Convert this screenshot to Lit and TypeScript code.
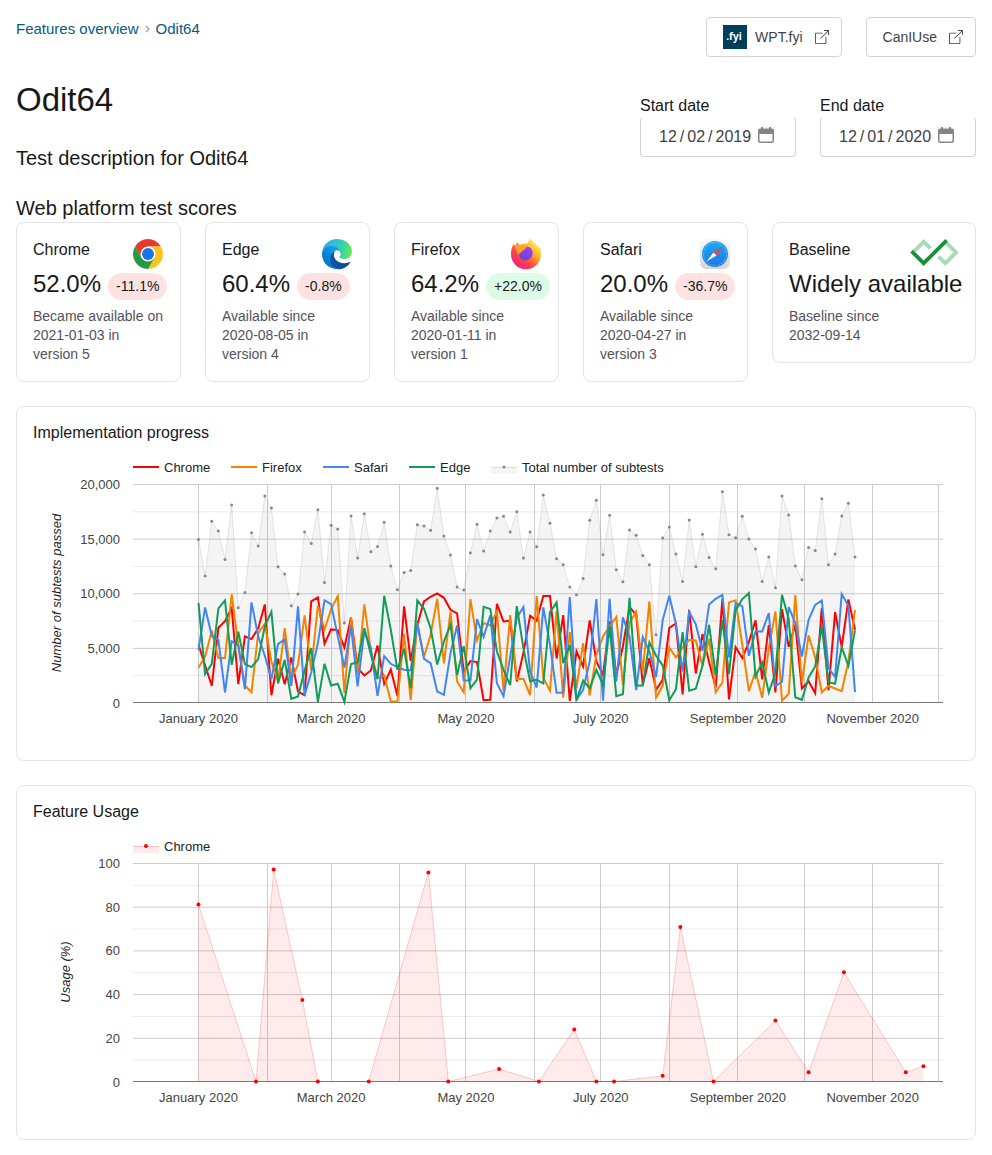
import { LitElement, html, svg, css } from "lit";
import { customElement, property } from "lit/decorators.js";

// Samples taken every three days, measured downwards from SAMPLE_TOP (full scale) to SAMPLE_ZERO.
const SAMPLE_TOP = 28;
const SAMPLE_ZERO = 683;

const TOTAL = [194,304,140,169,254,91,399,353,174,214,64,100,276,298,393,358,172,206,105,323,152,163,445,124,250,117,231,215,143,274,345,293,287,150,154,167,41,184,241,337,346,234,149,229,169,130,125,172,111,250,172,216,61,146,252,270,337,360,311,137,77,240,122,285,321,166,182,242,270,480,190,157,238,320,136,276,179,248,282,51,180,189,125,193,223,320,247,339,64,121,274,315,218,227,72,270,238,124,86,247];
const CHROME = [510,572,633,459,439,400,628,485,493,461,389,661,552,628,548,650,661,380,368,507,464,466,518,428,580,602,587,512,627,584,663,395,558,450,380,366,356,369,405,416,590,559,562,676,675,387,440,438,620,535,423,438,364,364,551,421,678,530,575,437,560,600,440,600,515,397,420,630,550,645,615,459,446,659,406,596,478,562,638,372,674,517,550,502,437,614,451,653,403,516,450,641,619,655,400,646,412,517,374,465];
const FIREFOX = [579,545,468,550,550,359,510,632,652,475,447,560,620,460,612,570,422,585,392,465,403,364,655,428,600,389,530,610,602,680,680,478,676,445,546,480,372,566,411,620,652,373,497,445,452,410,648,421,613,612,661,364,609,648,408,668,472,640,505,662,540,485,455,427,630,445,411,590,380,668,633,518,548,518,495,497,573,492,652,623,383,377,510,649,590,669,520,410,678,657,361,623,482,548,653,633,641,649,560,405];
const SAFARI = [525,398,484,495,653,499,512,643,383,485,543,613,507,494,633,395,661,593,505,377,388,485,578,452,635,470,520,663,544,567,577,585,587,447,552,565,650,660,535,452,617,617,433,486,422,625,664,545,430,397,590,638,398,510,654,653,367,675,645,560,373,678,372,620,428,485,646,487,530,607,436,363,447,590,411,449,528,389,372,360,548,385,394,543,470,470,415,634,621,397,445,545,435,390,377,580,607,358,393,652];
const EDGE = [384,598,567,401,377,570,471,568,577,553,455,411,626,555,672,665,587,520,681,567,632,627,681,568,562,460,540,613,363,465,585,522,640,377,402,460,569,500,450,601,514,640,614,396,403,530,585,631,394,520,619,615,626,412,383,565,510,677,617,640,585,630,455,664,658,369,632,632,503,543,572,676,643,472,648,642,572,450,601,436,598,407,373,355,605,563,653,595,360,433,667,675,608,575,455,622,627,517,573,467];

// [day of 2020, usage in percent]
const USAGE: [number, number][] = [
  [0, 81], [26, 0], [34, 97], [47, 37.3], [54, 0], [77, 0], [104, 95.7], [113, 0], [136, 5.7], [154, 0], [170, 23.8],
  [180, 0], [188, 0], [210, 2.6], [218, 70.7], [233, 0], [261, 27.9], [276, 4.2], [292, 50], [320, 4.2], [328, 7],
];

interface Series { name: string; color: string; points: [number, number][]; area?: boolean; dot?: number; fill?: number; stroke?: number; }

const daily = (samples: number[]): [number, number][] =>
  samples.map((v, i) => [i * 3, (SAMPLE_ZERO - v) / (SAMPLE_ZERO - SAMPLE_TOP)]);

const PROGRESS: Series[] = [
  { name: "Chrome", color: "#ff0000", points: daily(CHROME) },
  { name: "Firefox", color: "#f48400", points: daily(FIREFOX) },
  { name: "Safari", color: "#4285f4", points: daily(SAFARI) },
  { name: "Edge", color: "#0f9d58", points: daily(EDGE) },
  { name: "Total number of subtests", color: "#888888", points: daily(TOTAL), area: true, dot: 1.5, fill: 0.09, stroke: 0.2 },
];
const USAGE_SERIES: Series[] = [
  { name: "Chrome", color: "#ff0000", points: USAGE.map(([d, v]) => [d, v / 100] as [number, number]), area: true, dot: 2, fill: 0.08, stroke: 0.2 },
];

const MONTHS = [
  { day: 0, label: "January 2020" }, { day: 31, label: "" }, { day: 60, label: "March 2020" }, { day: 91, label: "" },
  { day: 121, label: "May 2020" }, { day: 152, label: "" }, { day: 182, label: "July 2020" }, { day: 213, label: "" },
  { day: 244, label: "September 2020" }, { day: 274, label: "" }, { day: 305, label: "November 2020" }, { day: 335, label: "" },
];

const LEFT = 100, RIGHT = 910, TOP = 30, BOTTOM = 248.5;
const px = (day: number) => 165.5 + day * 2.2104;
const py = (f: number) => BOTTOM - f * (BOTTOM - TOP);

@customElement("time-chart")
class TimeChart extends LitElement {
  @property({ attribute: false }) series: Series[] = [];
  @property({ attribute: false }) ticks: string[] = [];
  @property({ attribute: false }) legendX: number[] = [];
  @property({ attribute: "axis-title" }) axisTitle = "";
  @property({ type: Number, attribute: "title-x" }) titleX = 0;

  static styles = css`
    :host { display: block; }
    svg { display: block; width: 100%; height: auto; font: 13px "Liberation Sans", Arial, sans-serif; }
    .tick { fill: #444; }
    .legend { fill: #222; }
    .axis { fill: #222; font-style: italic; text-anchor: middle; }
    .end { text-anchor: end; }
    .mid { text-anchor: middle; }
  `;

  private drawSeries(s: Series) {
    const line = s.points.map(([d, f]) => `${px(d).toFixed(1)},${py(f).toFixed(1)}`);
    if (!s.area) return svg`<polyline points=${line.join(" ")} fill="none" stroke=${s.color} stroke-width="2"/>`;
    const last = s.points[s.points.length - 1][0];
    const outline = [`${px(0)},${BOTTOM}`, ...line, `${px(last)},${BOTTOM}`].join(" ");
    return svg`
      <polygon points=${outline} fill=${s.color} fill-opacity=${s.fill}/>
      <polyline points=${line.join(" ")} fill="none" stroke=${s.color} stroke-opacity=${s.stroke}/>`;
  }

  render() {
    const steps = this.ticks.length - 1;
    const areas = this.series.filter((s) => s.area);
    const lines = this.series.filter((s) => !s.area);
    return html`
      <svg viewBox="0 0 926 290" role="img" aria-label=${this.axisTitle}>
        ${this.series.map((s, i) => {
          const x = this.legendX[i];
          return svg`
            ${s.area
              ? svg`<rect x=${x} y="13" width="26" height="7" fill=${s.color} fill-opacity=${s.fill}/>
                  <path d="M${x} 13.5h26" stroke=${s.color} stroke-opacity=${s.stroke}/>
                  <circle cx=${x + 13} cy="13" r=${s.dot} fill=${s.color}/>`
              : svg`<path d="M${x} 13h26" stroke=${s.color} stroke-width="2"/>`}
            <text class="legend" x=${x + 31} y="18">${s.name}</text>`;
        })}
        ${Array.from({ length: steps }, (_, i) => svg`
          <rect x=${LEFT} y=${py((i + 0.5) / steps)} width=${RIGHT - LEFT} height="1" fill="#ebebeb"/>`)}
        ${Array.from({ length: steps }, (_, i) => svg`
          <rect x=${LEFT} y=${py((i + 1) / steps)} width=${RIGHT - LEFT} height="1" fill="#ccc"/>`)}
        ${MONTHS.map((m) => svg`<rect x=${Math.round(px(m.day) - 0.5)} y=${TOP} width="1" height=${BOTTOM - TOP} fill="#ccc"/>`)}
        ${areas.map((s) => this.drawSeries(s))}
        <rect x=${LEFT} y="248" width=${RIGHT - LEFT} height="1" fill="#777"/>
        ${lines.map((s) => this.drawSeries(s))}
        ${areas.map((s) => s.points.map(([d, f]) => svg`<circle cx=${px(d)} cy=${py(f)} r=${s.dot} fill=${s.color}/>`))}
        ${this.ticks.map((t, i) => svg`<text class="tick end" x="87" y=${Math.round(py(i / steps) + 5)}>${t}</text>`)}
        ${MONTHS.map((m) => (m.label ? svg`<text class="tick mid" x=${px(m.day)} y="269">${m.label}</text>` : ""))}
        <text class="axis" transform="translate(${this.titleX} 139) rotate(-90)">${this.axisTitle}</text>
      </svg>`;
  }
}

const external = html`<svg class="ext" viewBox="0 0 16 16" fill="currentColor" aria-hidden="true">
  <path fill-rule="evenodd" d="M8.636 3.5a.5.5 0 0 0-.5-.5H1.5A1.5 1.5 0 0 0 0 4.5v10A1.5 1.5 0 0 0 1.5 16h10a1.5 1.5 0 0 0 1.5-1.5V7.864a.5.5 0 0 0-1 0V14.5a.5.5 0 0 1-.5.5h-10a.5.5 0 0 1-.5-.5v-10a.5.5 0 0 1 .5-.5h6.636a.5.5 0 0 0 .5-.5z"/>
  <path fill-rule="evenodd" d="M16 .5a.5.5 0 0 0-.5-.5h-5a.5.5 0 0 0 0 1h3.793L6.146 9.146a.5.5 0 1 0 .708.708L15 1.707V5.5a.5.5 0 0 0 1 0v-5z"/></svg>`;

const wpt = html`<svg class="wpt" viewBox="0 0 24 24" aria-hidden="true">
  <rect width="24" height="24" fill="#003f5c"/>
  <text x="11" y="15" text-anchor="middle" fill="#fff" font-family="Noto Sans, sans-serif" font-weight="700" font-size="10">.fyi</text></svg>`;

const chromeLogo = html`<svg class="logo" viewBox="0 0 48 48" aria-hidden="true">
  <path d="M24 12h20.780A24 24 0 0 0 3.220 12l10.390 18z" fill="#e33b2e"/>
  <path d="M34.390 30 24 48A24 24 0 0 0 44.780 12H24z" fill="#ffc41a"/>
  <path d="M13.610 30 3.220 12A24 24 0 0 0 24 48l10.390-18z" fill="#269a43"/>
  <circle cx="24" cy="24" r="12" fill="#fff"/><circle cx="24" cy="24" r="9.500" fill="#1a73e8"/></svg>`;

const edgeLogo = html`<svg class="logo" viewBox="0 0 256 256" aria-hidden="true">
  <defs>
    <linearGradient id="ea" x1="63" y1="177" x2="242" y2="177" gradientUnits="userSpaceOnUse"><stop stop-color="#0c59a4"/><stop offset="1" stop-color="#114a8b"/></linearGradient>
    <linearGradient id="eb" x1="157" y1="100" x2="46" y2="222" gradientUnits="userSpaceOnUse"><stop stop-color="#1b9de2"/><stop offset=".3" stop-color="#1595df"/><stop offset=".7" stop-color="#0680d7"/><stop offset="1" stop-color="#0078d4"/></linearGradient>
    <linearGradient id="ec" x1="10" y1="60" x2="250" y2="120" gradientUnits="userSpaceOnUse"><stop stop-color="#35a8e8"/><stop offset=".4" stop-color="#2ec2d8"/><stop offset=".7" stop-color="#40d49a"/><stop offset="1" stop-color="#66eb50"/></linearGradient>
  </defs>
  <path fill="url(#ea)" d="M235.700 195.500a93.700 93.700 0 0 1-10.600 4.700 101.900 101.900 0 0 1-35.900 6.400c-47.300 0-88.500-32.500-88.500-74.300a31.500 31.500 0 0 1 16.400-27.300c-42.800 1.800-53.800 46.400-53.800 72.500 0 74 68.100 81.400 82.800 81.400 7.900 0 19.800-2.300 27-4.600l1.300-.4a128.300 128.300 0 0 0 66.600-52.800 4 4 0 0 0-5.300-5.600z"/>
  <path fill="url(#eb)" d="M105.700 241.400a79.200 79.200 0 0 1-22.700-21.300 80.700 80.700 0 0 1 29.500-120c3.200-1.500 8.500-4.100 15.600-4a32.400 32.400 0 0 1 25.700 13 31.900 31.900 0 0 1 6.300 18.700c0-.2 24.500-79.600-80-79.600-43.900 0-80 41.600-80 78.200a130.200 130.200 0 0 0 12.100 56 128 128 0 0 0 156.400 67 75.500 75.500 0 0 1-62.800-8z"/>
  <path fill="url(#ec)" d="M152.300 148.900c-.9 1-3.400 2.500-3.400 5.600 0 2.600 1.700 5.200 4.800 7.300 14.300 10 41.400 8.600 41.500 8.600a59.600 59.600 0 0 0 30.300-8.300 61.400 61.400 0 0 0 30.400-52.900c.3-22.400-8-37.300-11.300-43.900C223.500 23.900 177.700 0 128 0A128 128 0 0 0 0 126.200c.5-36.500 36.800-66 80-66 3.500 0 23.500.3 42 10a72.600 72.600 0 0 1 30.900 29.300c6.100 10.600 7.200 24.100 7.200 29.500s-2.700 13.300-7.800 19.900z"/></svg>`;

const firefoxLogo = html`<svg class="logo" viewBox="0 0 30 30" aria-hidden="true">
  <defs>
    <linearGradient id="fa" x1="25" y1="3" x2="5" y2="27" gradientUnits="userSpaceOnUse"><stop stop-color="#fff14f"/><stop offset=".35" stop-color="#ffa930"/><stop offset=".65" stop-color="#ff4a3a"/><stop offset="1" stop-color="#f0208a"/></linearGradient>
    <linearGradient id="fb" x1="10" y1="20" x2="20" y2="8" gradientUnits="userSpaceOnUse"><stop stop-color="#5f45d8"/><stop offset="1" stop-color="#a33df0"/></linearGradient>
  </defs>
  <path fill="url(#fa)" d="M19.500-.8c-1 2-2.500 3.300-3.500 5.500-2.500-.6-4.500-.2-6.500 1-1 .1-2.500-.7-2.800-2.400-1.400 1-2 2.300-2.100 3.500-.8-.2-1.600-1-1.700-2C.8 8 0 11.400 0 15a15 15 0 0 0 30 .5c.2-3.300-.7-7-2.500-9.300.3 1.200.3 2.200.2 3C26 4.500 21.500 3.500 19.500-.8z"/>
  <path fill="url(#fb)" d="M14 8.200c4.500-1.500 8 2 7.600 6.400-.3 4-3.200 6.700-7 6.700-3.900 0-6.600-3-6.600-6.300 0-1.900 1-2.600 3.600-3.200 1.800-.4 2.800-1.200 2.400-3.600z"/>
  <path fill="#ffa22e" d="M3.600 7c2.800-1.600 6-1.300 8.200.4 1.400.2 2.700.4 3.600.6-.2 1.400-1.700 2.400-3.600 2.700l-1 2.200c-1.700.5-2.800 1.300-2.800 3.200C6.400 13.800 5.100 10.500 3.600 7z"/></svg>`;

const safariLogo = html`<svg class="logo" viewBox="0 0 30 30" aria-hidden="true">
  <defs>
    <linearGradient id="sa" x1="0" y1="0" x2="0" y2="1"><stop stop-color="#fafafa"/><stop offset="1" stop-color="#d4d4d4"/></linearGradient>
    <linearGradient id="sb" x1="0" y1="0" x2="0" y2="1"><stop stop-color="#1fa9f5"/><stop offset="1" stop-color="#1d76e6"/></linearGradient>
  </defs>
  <rect width="30" height="30" rx="6.500" fill="url(#sa)"/>
  <circle cx="15" cy="15" r="13" fill="url(#sb)"/>
  <circle cx="15" cy="15" r="11.500" fill="none" stroke="#fff" stroke-opacity=".45" stroke-width="1.200" stroke-dasharray=".5 .8"/>
  <path fill="#f0443a" d="M23.500 7.500 13.500 13.500l3 3z"/><path fill="#fff" d="M6.500 22.500l7-9 3 3z"/></svg>`;

const baselineLogo = html`<svg class="baseline" viewBox="0 0 540 300" aria-hidden="true">
  <path fill="#a8dab5" d="M150 0l90 90-30 30-60-60-90 90-30-30zM420 30l120 120-150 150-90-90 30-30 60 60 90-90-90-90z"/>
  <path fill="#1e8e3e" d="M0 150l150 150L420 30 390 0 150 240 30 120z"/></svg>`;

const BROWSERS = [
  { name: "Chrome", logo: chromeLogo, score: "52.0%", delta: "-11.1%", note: "Became available on 2021-01-03 in version 5" },
  { name: "Edge", logo: edgeLogo, score: "60.4%", delta: "-0.8%", note: "Available since 2020-08-05 in version 4" },
  { name: "Firefox", logo: firefoxLogo, score: "64.2%", delta: "+22.0%", note: "Available since 2020-01-11 in version 1" },
  { name: "Safari", logo: safariLogo, score: "20.0%", delta: "-36.7%", note: "Available since 2020-04-27 in version 3" },
];

@customElement("app-root")
class AppRoot extends LitElement {
  static styles = css`
    :host {
      display: block; box-sizing: border-box; padding: 17px 16px 16px; background: #fff; color: #18181b;
      font: 16px/22px "Liberation Sans", Arial, sans-serif;
    }
    *, *::before, *::after { box-sizing: border-box; }
    h1, h2, h3, p { margin: 0; font-weight: 400; }
    .row { display: flex; justify-content: space-between; align-items: flex-start; gap: 24px; }
    .links, .dates { display: flex; gap: 24px; }
    nav { display: flex; align-items: center; gap: 6px; font-size: 15px; line-height: 24px; }
    nav a { color: #075985; text-decoration: none; }
    .sep { width: 5px; height: 8px; fill: none; stroke: #a1a1aa; stroke-width: 1.3; }
    .btn {
      display: flex; align-items: center; height: 40px; padding: 0 11px 0 16px; border: 1px solid #d4d4d8; border-radius: 4px;
      color: #3f3f46; text-decoration: none; font-size: 14px;
    }
    .wpt { width: 24px; height: 24px; margin-right: 8px; }
    .ext { width: 14px; height: 14px; margin: 0 1px 0 12px; }
    .top { margin-top: 23px; }
    h1 { font-size: 33px; line-height: 40px; font-weight: 500; }
    .desc { margin-top: 24px; font-size: 20px; line-height: 28px; }
    .dates { padding-top: 15px; }
    .dates label { display: block; }
    .dates input {
      display: block; width: 156px; height: 40px; padding: 0 21px 0 17px; border: 1px solid #d4d4d8; border-top: 0; border-radius: 4px;
      background: #fff; color: #3f3f46; font: 16px "Liberation Sans", Arial, sans-serif; outline: none;
    }
    input::-webkit-datetime-edit-text { padding: 0 2px; }
    input::-webkit-calendar-picker-indicator {
      width: 16px; height: 16px; padding: 0; margin: 0 0 3px 6px;
      background: url("data:image/svg+xml,%3Csvg xmlns='http://www.w3.org/2000/svg' viewBox='0 0 16 16'%3E%3Cpath fill='%23858585' fill-rule='evenodd' d='M3 0h2v1.500h6V0h2v1.500h1a2 2 0 0 1 2 2V14a2 2 0 0 1-2 2H2a2 2 0 0 1-2-2V3.500a2 2 0 0 1 2-2h1zM1.500 7v6.800q0 .7.7.7h11.600q.7 0 .7-.7V7z'/%3E%3C/svg%3E") center / 16px 16px no-repeat;
    }
    h2 { margin-top: 22px; font-size: 20px; line-height: 28px; }
    .cards { display: grid; grid-template-columns: repeat(4, minmax(0, 165fr)) minmax(0, 204fr); gap: 24px; align-items: start; }
    .card { border: 1px solid #e4e4e7; border-radius: 8px; padding: 16px 16px 17px; }
    .head { display: flex; justify-content: space-between; height: 30px; }
    .logo { width: 30px; height: 30px; margin-right: 1px; overflow: visible; }
    .baseline { width: 49px; height: 27px; }
    .score { display: flex; align-items: center; gap: 7px; height: 30px; font-size: 24px; white-space: nowrap; }
    .pill { border-radius: 14px; padding: 0 8px; margin-top: 5px; font-size: 14px; line-height: 27px; background: #fee2e2; }
    .up { background: #dcfce7; }
    .note { margin-top: 8px; font-size: 14px; line-height: 19px; color: #52525b; }
    .panel { margin-top: 24px; padding: 16px; border: 1px solid #e4e4e7; border-radius: 8px; }
    h3 { font-size: 16px; line-height: 20px; margin-bottom: 11px; }
  `;

  render() {
    return html`
      <div class="row">
        <nav aria-label="Breadcrumb">
          <a href="#features">Features overview</a>
          <svg class="sep" viewBox="0 0 5 8" aria-hidden="true"><path d="M1 1l3 3-3 3"/></svg>
          <a href="#odit64">Odit64</a>
        </nav>
        <div class="links">
          <a class="btn" href="#wpt">${wpt}WPT.fyi${external}</a>
          <a class="btn" href="#caniuse">CanIUse${external}</a>
        </div>
      </div>
      <div class="row top">
        <div>
          <h1>Odit64</h1>
          <p class="desc">Test description for Odit64</p>
        </div>
        <div class="dates">
          <div><label for="start">Start date</label><input id="start" type="date" value="2019-12-02"></div>
          <div><label for="end">End date</label><input id="end" type="date" value="2020-12-01"></div>
        </div>
      </div>
      <h2>Web platform test scores</h2>
      <div class="cards">
        ${BROWSERS.map((b) => html`
          <section class="card">
            <div class="head"><span>${b.name}</span>${b.logo}</div>
            <div class="score">${b.score}<span class="pill ${b.delta.startsWith("+") ? "up" : ""}">${b.delta}</span></div>
            <p class="note">${b.note}</p>
          </section>`)}
        <section class="card">
          <div class="head"><span>Baseline</span>${baselineLogo}</div>
          <div class="score">Widely available</div>
          <p class="note">Baseline since<br>2032-09-14</p>
        </section>
      </div>
      <section class="panel">
        <h3>Implementation progress</h3>
        <time-chart .series=${PROGRESS} .ticks=${["0", "5,000", "10,000", "15,000", "20,000"]}
          .legendX=${[100, 198, 290, 376, 458]} axis-title="Number of subtests passed" title-x="28"></time-chart>
      </section>
      <section class="panel">
        <h3>Feature Usage</h3>
        <time-chart .series=${USAGE_SERIES} .ticks=${["0", "20", "40", "60", "80", "100"]}
          .legendX=${[100]} axis-title="Usage (%)" title-x="37"></time-chart>
      </section>`;
  }
}
